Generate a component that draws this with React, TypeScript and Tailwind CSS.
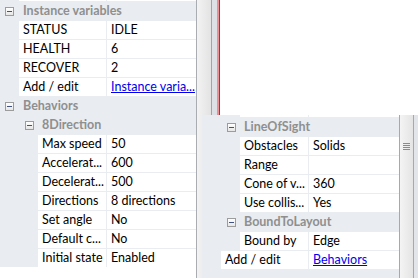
import React from 'react';

type Item =
  | { kind: 'sliver'; level: number; h: string }
  | { kind: 'head'; level: number; label: string }
  | { kind: 'row'; level: number; name: string; value?: string; link?: boolean };

const leftItems: Item[] = [
  { kind: 'sliver', level: 0, h: 'h-px' },
  { kind: 'head', level: 0, label: 'Instance variables' },
  { kind: 'row', level: 0, name: 'STATUS', value: 'IDLE' },
  { kind: 'row', level: 0, name: 'HEALTH', value: '6' },
  { kind: 'row', level: 0, name: 'RECOVER', value: '2' },
  { kind: 'row', level: 0, name: 'Add / edit', value: 'Instance varia...', link: true },
  { kind: 'head', level: 0, label: 'Behaviors' },
  { kind: 'head', level: 1, label: '8Direction' },
  { kind: 'row', level: 1, name: 'Max speed', value: '50' },
  { kind: 'row', level: 1, name: 'Accelerat...', value: '600' },
  { kind: 'row', level: 1, name: 'Decelerat...', value: '500' },
  { kind: 'row', level: 1, name: 'Directions', value: '8 directions' },
  { kind: 'row', level: 1, name: 'Set angle', value: 'No' },
  { kind: 'row', level: 1, name: 'Default c...', value: 'No' },
  { kind: 'row', level: 1, name: 'Initial state', value: 'Enabled' },
];

const overlayItems: Item[] = [
  { kind: 'sliver', level: 1, h: 'h-[2px]' },
  { kind: 'head', level: 1, label: 'LineOfSight' },
  { kind: 'row', level: 1, name: 'Obstacles', value: 'Solids' },
  { kind: 'row', level: 1, name: 'Range', value: '' },
  { kind: 'row', level: 1, name: 'Cone of v...', value: '360' },
  { kind: 'row', level: 1, name: 'Use collis...', value: 'Yes' },
  { kind: 'head', level: 1, label: 'BoundToLayout' },
  { kind: 'row', level: 1, name: 'Bound by', value: 'Edge' },
  { kind: 'row', level: 0, name: 'Add / edit', value: 'Behaviors', link: true },
];

const Toggle = () => (
  <span className="flex h-[9px] w-[9px] shrink-0 items-center justify-center border border-[#9c9c9c] bg-gradient-to-b from-white to-[#e6e6e6]">
    <span className="h-px w-[5px] bg-[#3f5283]" />
  </span>
);

const GridRow = ({ item }: { item: Item }) => {
  if (item.kind === 'head') {
    return (
      <div className={`flex h-[18px] items-center ${item.level ? 'pl-[25px]' : 'pl-[5px]'}`}>
        <Toggle />
        <span className={`${item.level ? 'ml-[8px]' : 'ml-[9px]'} font-bold leading-[18px] text-[#8f8f8f]`}>
          {item.label}
        </span>
      </div>
    );
  }
  const h = item.kind === 'sliver' ? item.h : 'h-[18px]';
  return (
    <div className={`flex gap-px ${h} ${item.level ? 'pl-[38px]' : 'pl-[19px]'}`}>
      <div className={`${item.level ? 'w-[68px]' : 'w-[87px]'} overflow-hidden whitespace-nowrap bg-white pl-[4px] leading-[18px] text-black`}>
        {item.kind === 'row' ? item.name : null}
      </div>
      <div className="flex-1 overflow-hidden whitespace-nowrap bg-white pl-[4px] leading-[18px] text-black">
        {item.kind === 'row' &&
          (item.link ? <span className="text-[#0000ee] underline">{item.value}</span> : item.value)}
      </div>
    </div>
  );
};

const Grid = ({ items }: { items: Item[] }) => (
  <div className="flex flex-col gap-px">
    {items.map((it, i) => (
      <GridRow key={i} item={it} />
    ))}
  </div>
);

export default function App() {
  return (
    <div className="relative flex h-[278px] w-[418px] overflow-hidden bg-white font-['Lato',sans-serif] text-[12.5px]">
      {/* left property grid */}
      <div className="flex w-[196px] flex-col">
        <div className="bg-[#e9ecf0]">
          <Grid items={leftItems} />
        </div>
        <div className="flex-1 bg-white" />
      </div>

      {/* splitter + ruler strip */}
      <div className="flex h-full">
        <div className="w-px bg-[#a9acb1]" />
        <div className="w-[14px] bg-gradient-to-r from-[#f3f3f3] to-[#e3e3e3]" />
        <div className="w-px bg-[#a3a3a3]" />
        <div className="w-[5px] bg-[#dde1e6]" />
        <div className="w-[2px] bg-[#ee8e95]" />
        <div className="w-px bg-[#555]" />
      </div>
      <div className="flex-1 bg-white" />

      {/* overlaid behaviors panel */}
      <div className="absolute left-[202px] top-[115px] flex h-[163px] w-[216px] bg-[#e9ecf0]">
        <div className="w-[197px]">
          <Grid items={overlayItems} />
        </div>
        <div className="w-px bg-[#a8a8a8]" />
        <div className="flex w-[13px] justify-center bg-gradient-to-r from-[#f4f4f4] to-[#e4e4e4] pt-[28px]">
          <div className="flex h-[7px] w-[7px] flex-col justify-between">
            <div className="h-px bg-[#8a8a8a]" />
            <div className="h-px bg-[#8a8a8a]" />
            <div className="h-px bg-[#8a8a8a]" />
            <div className="h-px bg-[#8a8a8a]" />
          </div>
        </div>
        <div className="w-px bg-[#a8a8a8]" />
        <div className="flex-1 bg-[#e2e5ea]" />
      </div>
    </div>
  );
}
